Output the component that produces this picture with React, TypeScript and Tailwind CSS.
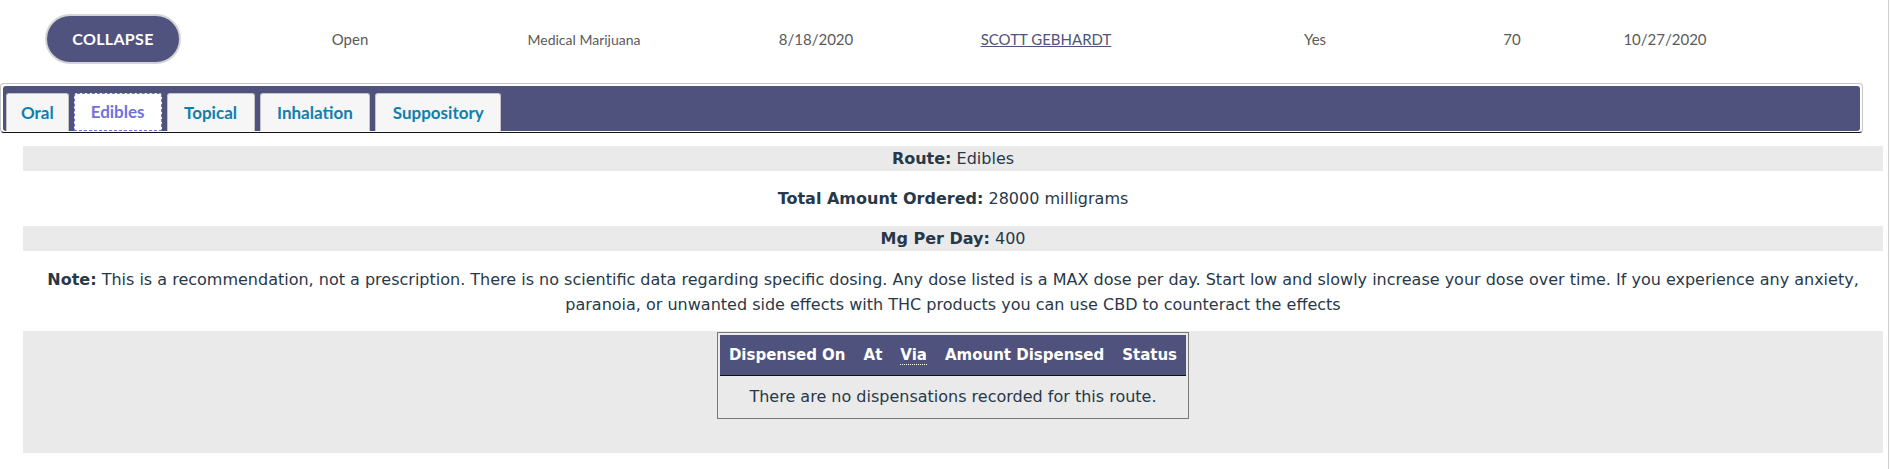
import React from 'react';

const headerCells = ['Open', 'Medical Marijuana', '8/18/2020', 'SCOTT GEBHARDT', 'Yes', '70', '10/27/2020'];
const tabs = ['Oral', 'Edibles', 'Topical', 'Inhalation', 'Suppository'];

const body = { fontFamily: '"DejaVu Sans", Verdana, sans-serif' };
const lato = { fontFamily: 'Lato, "Liberation Sans", sans-serif' };

export default function App() {
    const active = 'Edibles';

    return (
        <div className="w-[1889px] min-h-[469px] bg-white border-r border-[#cfcfcf]">
            {/* summary row */}
            <div
                className="h-[78px] mb-[5px] grid grid-cols-[226px_248px_220px_244px_216px_322px_72px_234px] items-center text-[15px] text-[#5a5a5a]"
                style={lato}
            >
                <div className="flex justify-center">
                    <button className="w-[136px] h-[50px] rounded-full bg-[#4f537e] border-2 border-[#d4d4d4] text-white font-bold text-[16px] tracking-[0.3px]">
                        COLLAPSE
                    </button>
                </div>
                {headerCells.map((c) => (
                    <div key={c} className={c === 'Medical Marijuana' ? 'text-center text-[14px]' : 'text-center'}>
                        {c === 'SCOTT GEBHARDT' ? (
                            <a href="#" className="text-[#4f537e] underline">{c}</a>
                        ) : (
                            c
                        )}
                    </div>
                ))}
            </div>

            {/* tabs */}
            <div className="w-[1863px] border border-[#c5c5c5] border-b-[#111] rounded-[4px] pt-[2px] px-[2px] pb-[1px]">
                <ul className="bg-[#4f527d] rounded-[3px] h-[45px] pl-[3px] flex items-end gap-[5px]" style={lato}>
                    {tabs.map((t) => (
                        <li
                            key={t}
                            className={
                                t === active
                                    ? 'h-[38px] px-[16px] flex items-center bg-white border border-dashed border-[#6f73d9] rounded-t-[3px] text-[#6f73d9] font-bold text-[17px]'
                                    : 'h-[38px] px-[16.5px] first:px-[14px] flex items-center bg-[#f6f6f6] border border-[#c5c5c5] border-b-0 rounded-t-[3px] text-[#0f7fad] font-bold text-[17px]'
                            }
                        >
                            {t}
                        </li>
                    ))}
                </ul>
            </div>

            {/* route details */}
            <div className="ml-[23px] mr-[5px] mt-[13px] text-[16px] leading-[25px] text-[#283848] text-center" style={body}>
                <div className="bg-[#eaeaea]">
                    <b>Route:</b> Edibles
                </div>
                <div className="my-[15px]">
                    <b>Total Amount Ordered:</b> 28000 milligrams
                </div>
                <div className="bg-[#eaeaea]">
                    <b>Mg Per Day:</b> 400
                </div>
                <p className="mt-[16px] mb-[14px]">
                    <b>Note:</b> This is a recommendation, not a prescription. There is no scientific data regarding specific dosing. Any dose listed is a MAX dose per day. Start low and slowly increase your dose over time. If you experience any anxiety, paranoia, or unwanted side effects with THC products you can use CBD to counteract the effects
                </p>
                <div className="bg-[#eaeaea] h-[122px] pt-[1px]">
                    <table className="mx-auto border border-[#777] border-separate border-spacing-0 p-[2px]">
                        <thead>
                            <tr className="bg-[#4f527d] text-white text-[15px]">
                                <th className="h-[41px] px-[9px] font-bold border-b border-[#111]">Dispensed On</th>
                                <th className="h-[41px] px-[9px] font-bold border-b border-[#111]">At</th>
                                <th className="h-[41px] px-[9px] font-bold border-b border-[#111]">
                                    <abbr className="no-underline border-b border-dotted border-white">Via</abbr>
                                </th>
                                <th className="h-[41px] px-[9px] font-bold border-b border-[#111]">Amount Dispensed</th>
                                <th className="h-[41px] px-[9px] font-bold border-b border-[#111]">Status</th>
                            </tr>
                        </thead>
                        <tbody>
                            <tr>
                                <td colSpan={5} className="h-[40px] text-center">
                                    There are no dispensations recorded for this route.
                                </td>
                            </tr>
                        </tbody>
                    </table>
                </div>
            </div>
        </div>
    );
}
